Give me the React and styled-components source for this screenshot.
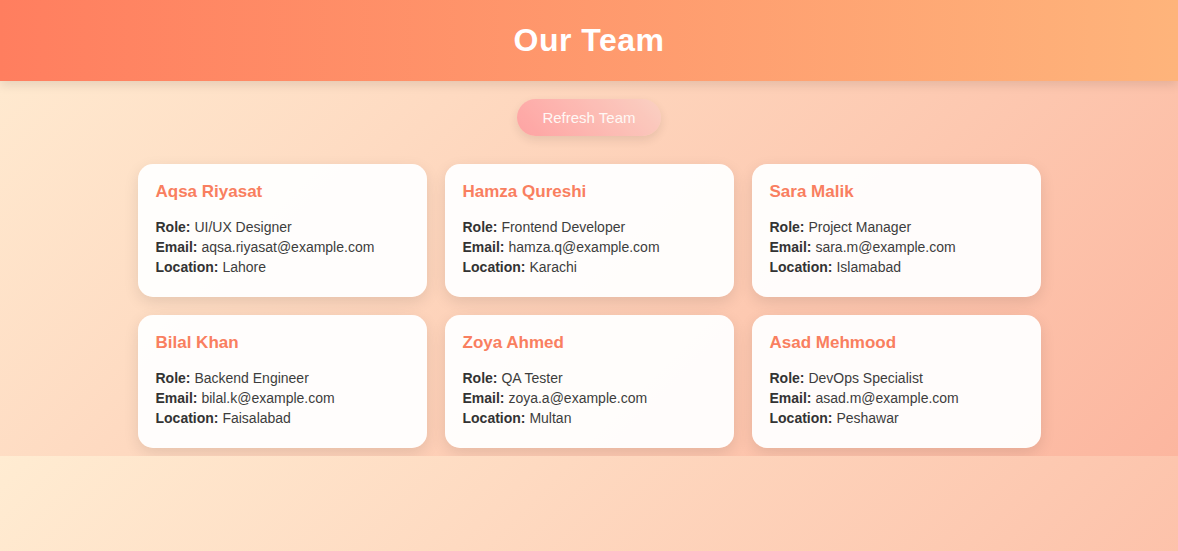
import React from 'react'
import styled, { createGlobalStyle } from 'styled-components'

const members = [
  { name: 'Aqsa Riyasat', role: 'UI/UX Designer', email: 'aqsa.riyasat@example.com', location: 'Lahore' },
  { name: 'Hamza Qureshi', role: 'Frontend Developer', email: 'hamza.q@example.com', location: 'Karachi' },
  { name: 'Sara Malik', role: 'Project Manager', email: 'sara.m@example.com', location: 'Islamabad' },
  { name: 'Bilal Khan', role: 'Backend Engineer', email: 'bilal.k@example.com', location: 'Faisalabad' },
  { name: 'Zoya Ahmed', role: 'QA Tester', email: 'zoya.a@example.com', location: 'Multan' },
  { name: 'Asad Mehmood', role: 'DevOps Specialist', email: 'asad.m@example.com', location: 'Peshawar' }
]

const GlobalStyle = createGlobalStyle`
  body {
    margin: 0;
    font-family: "Liberation Sans", Arial, sans-serif;
    background: linear-gradient(135deg, #ffecd2 0%, #fcb69f 100%);
  }
`

const Header = styled.header`
  background: linear-gradient(to right, #ff7e5f, #feb47b);
  box-shadow: 0 4px 10px rgba(0, 0, 0, 0.1);
  padding: 22px 0;
  text-align: center;
`

const Title = styled.h1`
  margin: 0;
  color: #fff;
  font-size: 32px;
  line-height: 37px;
  letter-spacing: 0.5px;
  font-weight: bold;
`

const Toolbar = styled.div`
  display: flex;
  justify-content: center;
  padding-top: 18px;
`

const RefreshButton = styled.button`
  width: 144px;
  height: 37px;
  border: none;
  border-radius: 20px;
  background: linear-gradient(45deg, #ff9a9e 0%, #fad0c4 100%);
  color: #fff;
  opacity: 0.85;
  font-family: "Liberation Sans", Arial, sans-serif;
  font-size: 15px;
  box-shadow: 0 4px 10px rgba(0, 0, 0, 0.1);
  cursor: pointer;
`

const Grid = styled.div`
  width: 903px;
  margin: 0 auto;
  padding: 28px 0 8px;
  display: grid;
  grid-template-columns: repeat(3, 1fr);
  gap: 18px;
`

const Card = styled.div`
  background: rgba(255, 255, 255, 0.95);
  border-radius: 15px;
  padding: 18px 18px 20px;
  box-shadow: 0 5px 15px rgba(0, 0, 0, 0.1);
`

const Name = styled.h3`
  margin: 0 0 15px;
  color: #f97f60;
  font-size: 17px;
  line-height: 20px;
  font-weight: bold;
`

const Line = styled.p`
  margin: 0;
  font-size: 14px;
  line-height: 20px;
  color: #3d3d3d;

  strong {
    font-weight: bold;
    color: #333;
  }
`

function MemberCard ({ member }) {
  return (
    <Card>
      <Name>{member.name}</Name>
      <Line><strong>Role:</strong> {member.role}</Line>
      <Line><strong>Email:</strong> {member.email}</Line>
      <Line><strong>Location:</strong> {member.location}</Line>
    </Card>
  )
}

export default function App () {
  return (
    <>
      <GlobalStyle />
      <Header>
        <Title>Our Team</Title>
      </Header>
      <Toolbar>
        <RefreshButton>Refresh Team</RefreshButton>
      </Toolbar>
      <Grid>
        {members.map(m => <MemberCard key={m.name} member={m} />)}
      </Grid>
    </>
  )
}
